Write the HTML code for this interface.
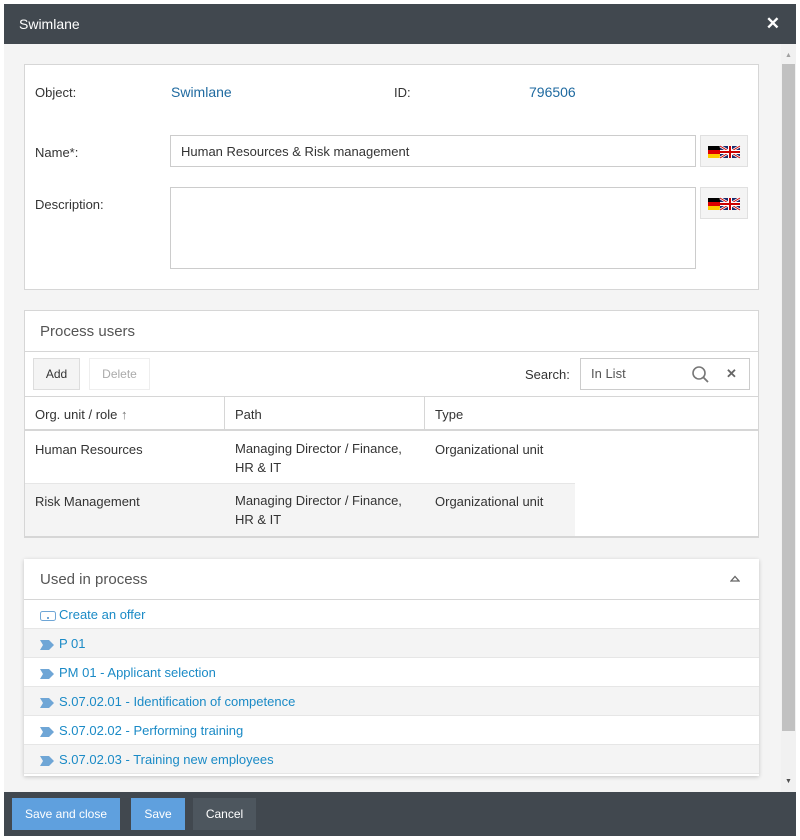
<!DOCTYPE html>
<html><head><style>
*{box-sizing:border-box;margin:0;padding:0}
body{width:800px;height:840px;background:#fff;font-family:"Liberation Sans",sans-serif;font-size:13px;color:#333;position:relative;overflow:hidden}
.dlg{position:absolute;left:4px;top:4px;width:792px;height:832px;background:#f4f4f4}
.hdr{position:absolute;left:0;top:0;width:792px;height:40px;background:#41484f;color:#fff;font-size:14px;line-height:40px;padding-left:15px}
.hdr .x{position:absolute;right:16px;top:0;font-weight:bold;font-size:17px}
.ftr{position:absolute;left:0;top:788px;width:792px;height:44px;background:#41484f}
.btn{position:absolute;top:6px;height:32px;line-height:32px;color:#fff;font-size:12px;text-align:center}
.a{position:absolute}
.panel{position:absolute;left:20px;width:735px;background:#fff;border:1px solid #d6d6d6}
.lbl{position:absolute;font-size:13px;color:#333}
.blue{color:#1f6aa0}
.inp{position:absolute;background:#fff;border:1px solid #ccc}
.flag{position:absolute;width:48px;height:32px;background:#f4f4f4;border:1px solid #e0e0e0}
.row{position:absolute;left:0;width:735px;height:29px;border-bottom:1px solid #e6e6e6;line-height:30px;padding-left:35px;color:#1a8ac6;font-size:13px}
.chev{position:absolute;left:16px;top:11px}
</style></head><body>
<div class="dlg">
<div class="hdr">Swimlane<span class="x">✕</span></div>
<div class="a" style="left:777px;top:40px;width:15px;height:748px;background:#f1f1f1"></div>
<div class="a" style="left:778px;top:60px;width:13px;height:667px;background:#c1c1c1"></div>
<div class="a" style="left:781px;top:48px;font-size:7px;color:#a0a0a0">▲</div>
<div class="a" style="left:781px;top:774px;font-size:7px;color:#505050">▼</div>

<div class="panel" style="top:60px;height:226px">
 <div class="lbl" style="left:10px;top:20px">Object:</div>
 <div class="lbl blue" style="left:146px;top:19px;font-size:14px">Swimlane</div>
 <div class="lbl" style="left:369px;top:20px">ID:</div>
 <div class="lbl blue" style="left:504px;top:19px;font-size:14px">796506</div>
 <div class="lbl" style="left:10px;top:80px">Name*:</div>
 <div class="inp" style="left:145px;top:70px;width:526px;height:32px;line-height:32px;padding-left:10px;font-size:13px">Human Resources &amp; Risk management</div>
 <div class="flag" style="left:675px;top:70px"><svg width="48" height="32" style="position:absolute;left:-1px;top:-1px"><rect x="8" y="11" width="12" height="4" fill="#000"/><rect x="8" y="15" width="12" height="4" fill="#d00"/><rect x="8" y="19" width="12" height="4" fill="#fc0"/><rect x="20" y="11" width="20" height="12" fill="#1b2a6b"/><path d="M20 11L40 23M40 11L20 23" stroke="#fff" stroke-width="2.5"/><path d="M20 11L40 23M40 11L20 23" stroke="#c00" stroke-width="1"/><path d="M30 11V23M20 17H40" stroke="#fff" stroke-width="4"/><path d="M30 11V23M20 17H40" stroke="#c00" stroke-width="2"/></svg></div>
 <div class="lbl" style="left:10px;top:132px">Description:</div>
 <div class="inp" style="left:145px;top:122px;width:526px;height:82px"></div>
 <div class="flag" style="left:675px;top:122px"><svg width="48" height="32" style="position:absolute;left:-1px;top:-1px"><rect x="8" y="11" width="12" height="4" fill="#000"/><rect x="8" y="15" width="12" height="4" fill="#d00"/><rect x="8" y="19" width="12" height="4" fill="#fc0"/><rect x="20" y="11" width="20" height="12" fill="#1b2a6b"/><path d="M20 11L40 23M40 11L20 23" stroke="#fff" stroke-width="2.5"/><path d="M20 11L40 23M40 11L20 23" stroke="#c00" stroke-width="1"/><path d="M30 11V23M20 17H40" stroke="#fff" stroke-width="4"/><path d="M30 11V23M20 17H40" stroke="#c00" stroke-width="2"/></svg></div>
</div>

<div class="panel" style="top:306px;height:228px">
 <div class="lbl" style="left:15px;top:12px;font-size:15px;color:#555">Process users</div>
 <div class="a" style="left:0;top:40px;width:733px;height:1px;background:#d6d6d6"></div>
 <div class="a" style="left:8px;top:47px;width:47px;height:32px;background:#f4f4f4;border:1px solid #ddd;line-height:30px;text-align:center;font-size:12px">Add</div>
 <div class="a" style="left:64px;top:47px;width:61px;height:32px;border:1px solid #eee;line-height:30px;text-align:center;font-size:12px;color:#aaa">Delete</div>
 <div class="lbl" style="left:500px;top:56px">Search:</div>
 <div class="inp" style="left:555px;top:47px;width:170px;height:32px;line-height:30px;padding-left:10px;color:#555">In List
  <svg class="a" style="left:110px;top:6px" width="20" height="20"><circle cx="8" cy="8" r="6" fill="none" stroke="#777" stroke-width="1.6"/><path d="M12.5 12.5L17 17" stroke="#777" stroke-width="1.8"/></svg>
  <span class="a" style="left:145px;top:0;color:#666;font-weight:bold">✕</span></div>
 <div class="a" style="left:0;top:85px;width:733px;height:1px;background:#d6d6d6"></div>
 <div class="lbl" style="left:10px;top:96px">Org. unit / role <span style="color:#777">↑</span></div>
 <div class="a" style="left:199px;top:85px;width:1px;height:33px;background:#d6d6d6"></div>
 <div class="lbl" style="left:210px;top:96px">Path</div>
 <div class="a" style="left:399px;top:85px;width:1px;height:33px;background:#d6d6d6"></div>
 <div class="lbl" style="left:410px;top:96px">Type</div>
 <div class="a" style="left:0;top:118px;width:733px;height:2px;background:#d6d6d6"></div>
 <div class="lbl" style="left:10px;top:131px">Human Resources</div>
 <div class="lbl" style="left:210px;top:128px;line-height:19px">Managing Director / Finance,<br>HR &amp; IT</div>
 <div class="lbl" style="left:410px;top:131px">Organizational unit</div>
 <div class="a" style="left:0;top:172px;width:550px;height:53px;background:#f4f4f4;border-top:1px solid #e6e6e6"></div>
 <div class="lbl" style="left:10px;top:183px">Risk Management</div>
 <div class="lbl" style="left:210px;top:180px;line-height:19px">Managing Director / Finance,<br>HR &amp; IT</div>
 <div class="lbl" style="left:410px;top:183px">Organizational unit</div>
 <div class="a" style="left:0;top:225px;width:733px;height:2px;background:#d6d6d6"></div>
</div>

<div class="panel" style="top:555px;height:217px;border:none;box-shadow:0 1px 4px rgba(0,0,0,.2)">
 <div class="lbl" style="left:16px;top:12px;font-size:15px;color:#555">Used in process</div>
 <svg class="a" style="left:706px;top:16px" width="10" height="7"><path d="M1 6L5 1.5L9 6Z" fill="none" stroke="#666" stroke-width="1.3"/></svg>
 <div class="a" style="left:0;top:40px;width:735px;height:1px;background:#d6d6d6"></div>
 <div class="row" style="top:41px;background:#fff"><svg class="chev" style="top:11px" width="16" height="10"><rect x="0.5" y="0.5" width="15" height="9" rx="2" fill="none" stroke="#6fa6d6"/><rect x="7" y="6" width="2" height="2" fill="#6fa6d6"/></svg>Create an offer</div>
 <div class="row" style="top:70px;background:#f4f4f4"><svg class="chev" width="14" height="10"><path d="M0 0H9L14 5L9 10H0L3 5Z" fill="#6fa6d6"/></svg>P 01</div>
 <div class="row" style="top:99px;background:#fff"><svg class="chev" width="14" height="10"><path d="M0 0H9L14 5L9 10H0L3 5Z" fill="#6fa6d6"/></svg>PM 01 - Applicant selection</div>
 <div class="row" style="top:128px;background:#f4f4f4"><svg class="chev" width="14" height="10"><path d="M0 0H9L14 5L9 10H0L3 5Z" fill="#6fa6d6"/></svg>S.07.02.01 - Identification of competence</div>
 <div class="row" style="top:157px;background:#fff"><svg class="chev" width="14" height="10"><path d="M0 0H9L14 5L9 10H0L3 5Z" fill="#6fa6d6"/></svg>S.07.02.02 - Performing training</div>
 <div class="row" style="top:186px;background:#f4f4f4"><svg class="chev" width="14" height="10"><path d="M0 0H9L14 5L9 10H0L3 5Z" fill="#6fa6d6"/></svg>S.07.02.03 - Training new employees</div>
</div>

<div class="ftr">
 <div class="btn" style="left:8px;width:108px;background:#5fa0de">Save and close</div>
 <div class="btn" style="left:127px;width:54px;background:#5fa0de">Save</div>
 <div class="btn" style="left:189px;width:63px;background:#4d565e">Cancel</div>
</div>
</div>
</body></html>
